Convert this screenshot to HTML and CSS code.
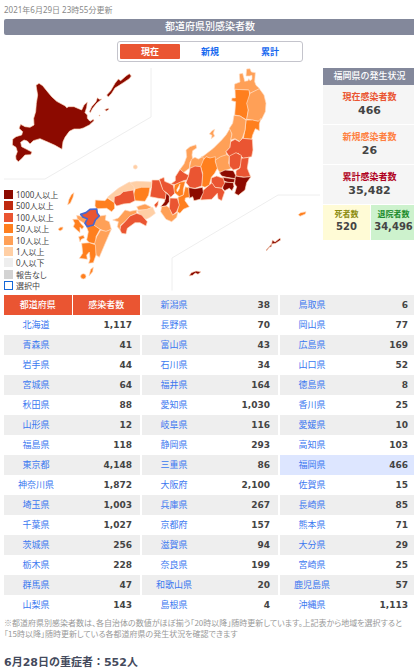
FILE: index.html
```html
<!DOCTYPE html>
<html lang="ja">
<head>
    <meta charset="UTF-8">
    <meta name="viewport" content="width=device-width, initial-scale=1.0">
    <title>都道府県別感染者数</title>
    <link rel="stylesheet" href="styles.css">
</head>
<body>
    <main class="content">
        <p class="updated">2021年6月29日 23時55分更新</p>
        <h1>都道府県別感染者数</h1>
        <div class="tabs">
            <button type="button" class="active">現在</button>
            <button type="button">新規</button>
            <button type="button">累計</button>
        </div>

        <div class="map-area">
            <svg class="map" viewBox="0 0 957 690" role="img" aria-label="日本地図">
                <path class="divider" d="M0 345H123L441 159V12M948 393H822L504 582V680"/>
                <!-- 北海道 -->
                <g class="lv1000" transform="translate(-12 -12)">
                    <path d="M108 76L117 70 128 77 140 92 155 110 170 124 196 138 200 143 206 140 222 140 238 147 245 150 252 135 262 126 260 142 255 158 262 165 262 175 270 184 280 178 282 182 268 195 250 204 240 207 222 207 208 214 195 232 189 245 186 268 165 256 145 247 120 236 100 242 90 252 82 243 72 240 62 247 65 260 80 268 96 276 92 284 75 285 65 296 55 305 48 298 47 288 52 275 48 262 37 255 38 238 48 230 65 225 68 215 57 205 62 193 75 200 90 202 102 195 101 175 107 155 109 130 113 105z"/>
                    <path d="M268 155L275 140 288 125 292 113 298 118 306 117 290 130 278 145 271 158zM320 105L332 92 345 70 355 57 362 62 378 48 388 41 394 48 388 56 370 68 358 76 345 84 335 100 325 111zM314 149L324 145 327 148 319 153zM297 165h3v3h-3z"/>
                </g>
                <!-- 東北 -->
                <g transform="translate(558 -12)">
                    <path class="lv10" d="M134 72L150 66 148 42 158 40 162 55 164 64 174 62 176 56 180 62 186 58 186 46 178 48 168 48 170 27 180 26 184 36 196 38 194 65 198 76 208 85 205 89 180 100 175 90 133 88z"/>
                    <path class="lv50" d="M135 88L177 90 180 110 172 130 175 150 170 180 150 168 134 165 137 125 125 122 126 114 136 114z"/>
                    <path class="lv10" d="M180 100L208 86 222 105 228 130 226 155 215 178 205 184 185 180 170 178 175 150 170 130z"/>
                    <path class="lv50" d="M168 180L188 180 205 184 213 175 208 192 208 212 196 206 188 225 185 238 160 235 165 210z"/>
                    <path class="lv10" d="M120 205L126 222 122 245 120 262 108 275 112 290 90 294 78 300 62 296 50 291 38 300 34 290 40 288 70 265 95 240 108 225z"/>
                    <path class="lv10" d="M132 166L150 168 168 180 165 210 158 232 150 245 135 236 122 240 126 222 118 205 128 190z"/>
                    <path class="lv100" d="M158 235L187 238 189 270 185 290 160 295 145 280 118 290 108 275 120 262 122 245 135 238 148 245z"/>
                    <path class="lv10" d="M58 222L66 212 74 208 70 220 74 228 64 236 66 226z"/>
                </g>
                <!-- 関東・中部・近畿 -->
                <g transform="translate(378 228)">
                    <path class="lv10" d="M168 30L180 20 198 14 200 24 188 32 186 45 188 58 180 66 178 85 160 98 150 88 162 72 170 50z"/>
                    <path class="lv10" d="M184 58L195 52 205 57 218 50 222 60 214 82 200 80 178 85z"/>
                    <path class="lv10" d="M256 60L272 50 290 44 298 48 296 70 305 85 285 92 270 98 258 80z"/>
                    <path class="lv100" d="M298 48L318 38 334 46 334 70 328 85 310 90 298 78z"/>
                    <path class="lv100" d="M334 55L357 52 352 85 362 110 345 112 318 108 318 92 330 84z"/>
                    <path class="lv1000" d="M268 98L285 90 310 92 318 108 315 116 290 112 275 108z"/>
                    <path class="lv1000" d="M316 108L340 112 363 110 350 128 345 150 325 166 314 160 320 140 314 132z"/>
                    <path class="lv1000" d="M278 112L315 117 312 128 295 128 280 122z"/>
                    <path class="lv1000" d="M280 126L310 128 312 140 306 152 298 145 284 152 278 145z"/>
                    <path class="lv100" d="M244 114L260 108 280 115 284 130 275 145 255 142 244 128z"/>
                    <path class="lv50" d="M220 60L228 50 240 54 256 50 256 65 262 85 254 100 244 112 238 135 225 142 215 138 218 100 212 80z"/>
                    <path class="lv100" d="M180 85L195 78 212 80 218 105 215 138 195 145 180 143 168 128 176 105z"/>
                    <path class="lv100" d="M238 135L246 128 255 142 275 145 284 156 275 182 264 176 262 160 245 178 212 180 218 152z"/>
                    <path class="lv1000" d="M173 142L195 146 218 142 220 158 210 178 192 182 188 170 178 175z"/>
                    <path class="lv100" d="M136 110L150 88 162 98 176 106 170 120 160 122 150 128 136 134 122 132 136 122z"/>
                    <path class="lv50" d="M134 134L152 126 166 124 160 148 160 165 148 170 130 155z"/>
                    <path class="lake" d="M150 132L140 150 142 156 148 146z"/>
                    <path class="lv50" d="M144 172L160 165 166 140 176 144 178 172 166 174 165 182 178 200 160 208 150 220 142 216 146 195z"/>
                    <path class="lv100" d="M88 118L102 112 104 124 118 130 130 136 134 160 122 172 112 160 98 150z"/>
                    <path class="lv1000" d="M108 158L118 168 118 185 108 198 92 200 104 185z"/>
                    <path class="lv100" d="M66 120L88 120 98 148 108 160 106 178 85 175 60 170 64 145z"/>
                    <path class="lv100" d="M72 195L85 182 84 195 78 204z"/>
                    <path class="lv10" d="M95 200L110 198 120 205 128 225 144 216 140 232 125 245 108 238 92 215z"/>
                    <path class="lv100" d="M120 174L142 175 148 195 140 215 128 225 118 205z"/>
                </g>
                <!-- 中国・四国・九州 -->
                <g transform="translate(198 288)">
                    <path class="lv1" d="M178 68L200 64 245 66 244 84 215 84 196 88 180 80z"/>
                    <path class="lv1" d="M112 112L145 85 178 66 192 80 192 90 165 95 135 112 132 126z"/>
                    <circle class="lv1" cx="196" cy="21" r="6"/>
                    <path class="lv50" d="M196 86L215 82 240 82 236 105 225 124 195 122 190 105z"/>
                    <path class="lv100" d="M133 110L150 104 160 95 190 90 195 122 180 130 160 132 140 138 132 128z"/>
                    <path class="lv50" d="M76 120L105 122 112 114 133 128 134 145 125 155 110 145 80 146 75 138z"/>
                    <path class="lv10" d="M200 140L225 132 245 142 230 150 205 150z"/>
                    <path class="lv1" d="M202 152L230 148 248 142 256 160 240 172 228 178 210 168z"/>
                    <path class="lv10" d="M128 180L145 174 165 150 180 154 200 150 200 160 180 168 165 185 152 195 150 210 142 200 145 185z"/>
                    <path class="lv100" d="M152 198L165 185 180 168 200 160 215 165 232 185 228 198 210 188 195 188 172 205 168 222 155 220 150 210z"/>
                    <path class="lv10" d="M20 166L40 170 52 176 46 192 35 185 22 178z"/>
                    <path class="lv50" d="M8 178L25 178 32 190 42 200 36 208 30 202 30 218 20 210 10 200 14 190z"/>
                    <path class="lv10" d="M75 182L90 168 108 165 106 180 118 185 124 208 108 215 90 208 70 196z"/>
                    <path class="lv50" d="M50 202L70 194 90 208 78 230 78 252 58 248 50 240 55 215z"/>
                    <path class="lv50" d="M26 230L40 226 44 234 34 238 30 246z"/>
                    <path class="lv10" d="M92 210L108 214 124 208 110 240 95 275 88 292 78 285 72 256 80 230z"/>
                    <path class="lv50" d="M35 250L58 248 76 254 78 285 70 308 56 310 60 296 58 276 50 285 52 298 28 295 38 280z"/>
                    <path class="lv100 selected" d="M32 163L48 158 60 148 80 147 82 160 88 168 76 180 70 195 52 200 45 190 52 176 40 172z"/>
                </g>
                <g class="lv50" transform="translate(-12 348)">
                    <path d="M203 74L207 58 214 44 222 38 219 52 211 70zM174 148L181 142 189 141 188 148 180 153zM267 288L272 268 280 262 278 275z"/>
                    <circle cx="250" cy="289" r="8"/>
                </g>
                <!-- 沖縄・奄美・小笠原 -->
                <g class="lv1000" transform="translate(588 348)">
                    <path d="M198 210L215 192 217 180 225 186 240 174 242 180 227 190 216 192 214 200 208 202 200 212z"/>
                    <path class="lv50" d="M295 104L302 98 318 95 316 102 300 109z"/>
                    <path d="M-33 288L-26 278 -12 273 3 275 -6 283 -14 279 -22 286z"/>
                </g>
            </svg>

            <ul class="legend">
                <li><i class="sw1000"></i>1000人以上</li>
                <li><i class="sw500"></i>500人以上</li>
                <li><i class="sw100"></i>100人以上</li>
                <li><i class="sw50"></i>50人以上</li>
                <li><i class="sw10"></i>10人以上</li>
                <li><i class="sw1"></i>1人以上</li>
                <li><i class="sw0"></i>0人以下</li>
                <li><i class="sw-none"></i>報告なし</li>
                <li><i class="sw-selected"></i>選択中</li>
            </ul>

            <section class="status">
                <h2>福岡県の発生状況</h2>
                <dl>
                    <div class="now"><dt>現在感染者数</dt><dd>466</dd></div>
                    <div class="new"><dt>新規感染者数</dt><dd>26</dd></div>
                    <div class="total"><dt>累計感染者数</dt><dd>35,482</dd></div>
                    <div class="dead"><dt>死者数</dt><dd>520</dd></div>
                    <div class="left"><dt>退院者数</dt><dd>34,496</dd></div>
                </dl>
            </section>
        </div>

        <div class="tables">
            <table>
                <tr><th>都道府県</th><th>感染者数</th></tr>
                <tr><td><a href="#">北海道</a></td><td>1,117</td></tr>
                <tr><td><a href="#">青森県</a></td><td>41</td></tr>
                <tr><td><a href="#">岩手県</a></td><td>44</td></tr>
                <tr><td><a href="#">宮城県</a></td><td>64</td></tr>
                <tr><td><a href="#">秋田県</a></td><td>88</td></tr>
                <tr><td><a href="#">山形県</a></td><td>12</td></tr>
                <tr><td><a href="#">福島県</a></td><td>118</td></tr>
                <tr><td><a href="#">東京都</a></td><td>4,148</td></tr>
                <tr><td><a href="#">神奈川県</a></td><td>1,872</td></tr>
                <tr><td><a href="#">埼玉県</a></td><td>1,003</td></tr>
                <tr><td><a href="#">千葉県</a></td><td>1,027</td></tr>
                <tr><td><a href="#">茨城県</a></td><td>256</td></tr>
                <tr><td><a href="#">栃木県</a></td><td>228</td></tr>
                <tr><td><a href="#">群馬県</a></td><td>47</td></tr>
                <tr><td><a href="#">山梨県</a></td><td>143</td></tr>
            </table>
            <table>
                <tr><td><a href="#">新潟県</a></td><td>38</td></tr>
                <tr><td><a href="#">長野県</a></td><td>70</td></tr>
                <tr><td><a href="#">富山県</a></td><td>43</td></tr>
                <tr><td><a href="#">石川県</a></td><td>34</td></tr>
                <tr><td><a href="#">福井県</a></td><td>164</td></tr>
                <tr><td><a href="#">愛知県</a></td><td>1,030</td></tr>
                <tr><td><a href="#">岐阜県</a></td><td>116</td></tr>
                <tr><td><a href="#">静岡県</a></td><td>293</td></tr>
                <tr><td><a href="#">三重県</a></td><td>86</td></tr>
                <tr><td><a href="#">大阪府</a></td><td>2,100</td></tr>
                <tr><td><a href="#">兵庫県</a></td><td>267</td></tr>
                <tr><td><a href="#">京都府</a></td><td>157</td></tr>
                <tr><td><a href="#">滋賀県</a></td><td>94</td></tr>
                <tr><td><a href="#">奈良県</a></td><td>199</td></tr>
                <tr><td><a href="#">和歌山県</a></td><td>20</td></tr>
                <tr><td><a href="#">島根県</a></td><td>4</td></tr>
            </table>
            <table>
                <tr><td><a href="#">鳥取県</a></td><td>6</td></tr>
                <tr><td><a href="#">岡山県</a></td><td>77</td></tr>
                <tr><td><a href="#">広島県</a></td><td>169</td></tr>
                <tr><td><a href="#">山口県</a></td><td>52</td></tr>
                <tr><td><a href="#">徳島県</a></td><td>8</td></tr>
                <tr><td><a href="#">香川県</a></td><td>25</td></tr>
                <tr><td><a href="#">愛媛県</a></td><td>10</td></tr>
                <tr><td><a href="#">高知県</a></td><td>103</td></tr>
                <tr class="current"><td><a href="#">福岡県</a></td><td>466</td></tr>
                <tr><td><a href="#">佐賀県</a></td><td>15</td></tr>
                <tr><td><a href="#">長崎県</a></td><td>85</td></tr>
                <tr><td><a href="#">熊本県</a></td><td>71</td></tr>
                <tr><td><a href="#">大分県</a></td><td>29</td></tr>
                <tr><td><a href="#">宮崎県</a></td><td>25</td></tr>
                <tr><td><a href="#">鹿児島県</a></td><td>57</td></tr>
                <tr><td><a href="#">沖縄県</a></td><td>1,113</td></tr>
            </table>
        </div>
        <p class="note">※都道府県別感染者数は、各自治体の数値がほぼ揃う「20時以降」随時更新しています。上記表から地域を選択すると<br>「15時以降」随時更新している各都道府県の発生状況を確認できます</p>
        <h2 class="severe">6月28日の重症者：552人</h2>
    </main>
</body>
</html>
```
FILE: styles.css
```css
* {
    box-sizing: border-box;
}
body {
    margin: 0;
    overflow-x: hidden;
    background-color: #fff;
    color: #444;
    font-family: "DejaVu Sans", "Noto Sans CJK JP", sans-serif;
    font-size: 9px;
}
h1, h2, p, ul, dl, dd {
    margin: 0;
    padding: 0;
}
.content {
    margin: 0 -2px 0 4px;
}
.updated {
    padding-top: 4px;
    height: 19px;
    font-family: "Noto Sans", "Noto Sans CJK JP", sans-serif;
    font-size: 8px;
    line-height: 12px;
    color: #888;
}
h1 {
    height: 16px;
    border-radius: 2px;
    background-color: #83889b;
    color: #fff;
    font-size: 10px;
    font-weight: 500;
    line-height: 15px;
    text-align: center;
}
.tabs {
    display: flex;
    width: 186px;
    height: 21px;
    margin: 6px auto 2px;
    padding: 2px;
    border: 1px solid #c4c4cc;
    border-radius: 3px;
}
.tabs button {
    flex: 1;
    padding: 0;
    border: none;
    border-radius: 1px;
    background: none;
    color: #1467f0;
    font: bold 9px/14px "Noto Sans CJK JP", sans-serif;
    cursor: pointer;
}
.tabs .active {
    background-color: #ea5532;
    color: #fff;
}

/* map */
.map-area {
    display: grid;
    grid-template-columns: 1fr 93px;
    margin-bottom: 1px;
}
.map {
    grid-area: 1 / 1;
    display: block;
    width: 100%;
}
.map path, .map circle {
    stroke: #ffdcc2;
    stroke-width: 2;
    stroke-linejoin: round;
}
.map .divider {
    fill: none;
    stroke: #eee;
    stroke-width: 3;
}
.map .lake {
    fill: #fff;
}
.map .selected {
    stroke: #4567d0;
    stroke-width: 5;
}
.lv1000 { fill: #8c0a00; }
.lv100 { fill: #ea5532; }
.lv50 { fill: #ff7f1e; }
.lv10 { fill: #ffa057; }
.lv1 { fill: #ffcfa5; }

.legend {
    grid-area: 1 / 1;
    align-self: end;
    display: flex;
    flex-direction: column;
    justify-content: space-between;
    height: 100px;
    margin-bottom: 4px;
    list-style: none;
    font-family: "Noto Sans", "Noto Sans CJK JP", sans-serif;
    font-size: 8px;
    line-height: 9px;
}
.legend li {
    display: flex;
    gap: 3px;
    font-feature-settings: "palt";
}
.legend i {
    width: 9px;
    height: 9px;
}
.sw1000 { background-color: #8c0a00; }
.sw500 { background-color: #bf2a10; }
.sw100 { background-color: #ea5532; }
.sw50 { background-color: #ff7f1e; }
.sw10 { background-color: #ffa057; }
.sw1 { background-color: #ffcfa5; }
.sw0 { background-color: #eee; }
.sw-none { background-color: #d3d3d3; }
.sw-selected { border: 1px solid #1467d8; }

/* status panel */
.status {
    margin-top: 4px;
    text-align: center;
}
.status h2 {
    height: 17px;
    background-color: #83889b;
    color: #fff;
    font-size: 9px;
    font-weight: 500;
    line-height: 16px;
}
.status dl {
    display: grid;
    grid-template-columns: 47px 1fr;
    gap: 1px;
    font-weight: bold;
}
.status dl div {
    grid-column: span 2;
    height: 39px;
    padding-top: 5px;
    background-color: #f5f5f5;
}
.status dt {
    line-height: 14px;
}
.status dd {
    font-size: 11px;
    line-height: 14px;
}
.status .now dt { color: #ea5532; }
.status .new dt { color: #ff7f3f; }
.status .total dt { color: #b00020; }
.status .dead, .status .left {
    grid-column: span 1;
    height: 35px;
    padding-top: 4px;
}
.status .dead { background-color: #fffbd6; }
.status .left { background-color: #cdf2cd; }
.status .dead dt, .status .left dt {
    font-size: 8px;
    line-height: 12px;
}
.status .dead dd, .status .left dd {
    font-size: 10px;
    line-height: 12px;
}
.status .dead dt { color: #8c8c10; }
.status .left dt { color: #1c8c2c; }

/* prefecture tables */
.tables {
    display: grid;
    grid-template-columns: repeat(3, 1fr);
    gap: 2px;
}
table {
    width: 100%;
    border-collapse: collapse;
    table-layout: fixed;
}
tr {
    height: 20px;
}
tr:nth-child(odd) {
    background-color: #eee;
}
tr.current {
    background-color: #dde6ff;
}
th {
    padding: 0;
    background-color: #ea5532;
    color: #fff;
    font-weight: 500;
    line-height: 16px;
}
th + th {
    border-left: 1px solid #fff;
}
td {
    padding: 0 4px 0 0;
    line-height: 16px;
    text-align: center;
}
td + td {
    padding-right: 8px;
    font-weight: bold;
    text-align: right;
}
a {
    color: #3b78f0;
    text-decoration: none;
}
.note {
    margin-top: 2px;
    font-family: "Noto Sans CJK JP", sans-serif;
    font-size: 8px;
    font-feature-settings: "palt";
    line-height: 11px;
    color: #999;
}
.severe {
    margin-top: 16px;
    color: #444a5c;
    font-size: 11px;
    line-height: 16px;
}
```
